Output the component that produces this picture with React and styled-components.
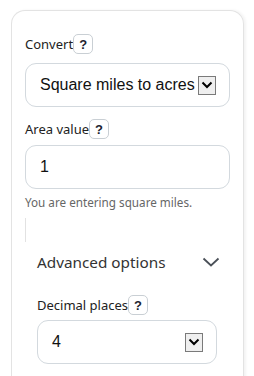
import React from "react";
import styled, { createGlobalStyle } from "styled-components";

const Global = createGlobalStyle`
  html, body { margin: 0; padding: 0; background: #fff; }
  body { font-family: "Noto Sans", "Open Sans", sans-serif; color: #222; overflow: hidden; }
`;

const Page = styled.div`
  padding: 10px 10px 0 11px;
`;

const Card = styled.div`
  width: 233px;
  height: 400px;
  border: 1px solid #e3e3e3;
  border-bottom: none;
  border-radius: 14px 14px 0 0;
  box-shadow: 2px 0 3px rgba(0, 0, 0, 0.05);
  padding: 23px 13px 0;
  box-sizing: border-box;
`;

const Field = styled.div`
  display: flex;
  flex-direction: column;
  margin-bottom: ${(p) => p.$mb || 0}px;
`;

const LabelRow = styled.div`
  display: flex;
  align-items: center;
  height: 20px;
  font-size: 13px;
  color: #222;
  margin-bottom: ${(p) => p.$mb || 8}px;
`;

const Help = styled.span`
  display: inline-flex;
  align-items: center;
  justify-content: center;
  width: 20px;
  height: 20px;
  box-sizing: border-box;
  border: 1px solid #c9cfd4;
  border-radius: 5px;
  font-family: "Liberation Sans", Arial, sans-serif;
  font-weight: bold;
  font-size: 13px;
  color: #1d2430;
  background: #fff;
`;

const Box = styled.div`
  display: flex;
  align-items: center;
  height: 44px;
  box-sizing: border-box;
  border: 1px solid #d3d9de;
  border-radius: 11px;
  padding: 0 ${(p) => p.$pr ?? 13}px 0 14px;
  font-family: "Liberation Sans", Arial, sans-serif;
  font-size: 16px;
  color: #111;
  background: #fff;
  white-space: nowrap;
  overflow: hidden;
`;

const BoxText = styled.span`
  flex: 1;
`;

const Arrow = styled.span`
  display: inline-flex;
  align-items: center;
  justify-content: center;
  width: 18px;
  height: 19px;
  box-sizing: border-box;
  border: 1px solid #7a7a7a;
  background: #efefef;
  flex-shrink: 0;
`;

const Hint = styled.div`
  font-size: 11.7px;
  color: #666;
  margin-top: 5px;
`;

const Rule = styled.div`
  width: 1px;
  height: 24px;
  background: #e2e2e2;
  margin-top: 8px;
`;

const Advanced = styled.div`
  padding: 8px 13px 0 12px;
`;

const Summary = styled.div`
  display: flex;
  align-items: center;
  justify-content: space-between;
  font-size: 15.3px;
  color: #333;
  height: 24px;
  margin-bottom: 21px;
`;

const Chevron = () => (
  <svg width="18" height="10" viewBox="0 0 18 10" style={{ marginRight: -3 }}>
    <path d="M1.5 1.5 L9 8.5 L16.5 1.5" fill="none" stroke="#4a5058" strokeWidth="1.8" />
  </svg>
);

const SmallChevron = () => (
  <svg width="12" height="8" viewBox="0 0 12 8">
    <path d="M1.5 1.5 L6 6 L10.5 1.5" fill="none" stroke="#000" strokeWidth="2" />
  </svg>
);

export default function App() {
  return (
    <>
      <Global />
      <Page>
        <Card>
          <Field $mb={12}>
            <LabelRow $mb={9}>
              Convert<Help>?</Help>
            </LabelRow>
            <Box $pr={13}>
              <BoxText>Square miles to acres</BoxText>
              <Arrow>
                <SmallChevron />
              </Arrow>
            </Box>
          </Field>
          <Field>
            <LabelRow $mb={6}>
              Area value<Help>?</Help>
            </LabelRow>
            <Box>
              <BoxText>1</BoxText>
            </Box>
            <Hint>You are entering square miles.</Hint>
          </Field>
          <Rule />
          <Advanced>
            <Summary>
              Advanced options
              <Chevron />
            </Summary>
            <Field>
              <LabelRow $mb={5}>
                Decimal places<Help>?</Help>
              </LabelRow>
              <Box>
                <BoxText>4</BoxText>
                <Arrow>
                  <SmallChevron />
                </Arrow>
              </Box>
            </Field>
          </Advanced>
        </Card>
      </Page>
    </>
  );
}
